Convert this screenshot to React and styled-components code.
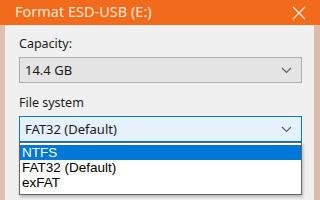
import React from 'react';
import styled, { createGlobalStyle } from 'styled-components';

const GlobalStyle = createGlobalStyle`
    html, body {
        margin: 0;
        padding: 0;
        width: 320px;
        height: 200px;
        overflow: hidden;
        background: #f0f0f0;
    }
`;

const Window = styled.div`
    width: 320px;
    height: 200px;
    display: flex;
    flex-direction: column;
    font-family: "Noto Sans", "Open Sans", sans-serif;
    color: #1a1a1a;
    box-sizing: border-box;
    overflow: hidden;
`;

const TitleBar = styled.div`
    height: 25px;
    flex: none;
    background: #f26a1c;
    display: flex;
    align-items: center;
    justify-content: space-between;
    padding: 0 14px 0 15px;
    box-sizing: border-box;
`;

const Title = styled.span`
    color: #fde6d4;
    font-size: 14.5px;
    line-height: 1;
    margin-top: -2px;
`;

const Body = styled.div`
    flex: 1;
    background: #f0f0f0;
    border-left: 5px solid #dfbfad;
    border-right: 6px solid #dcbcaa;
    padding: 11px 12px 0 14px;
    display: flex;
    flex-direction: column;
`;

const Label = styled.div`
    font-size: 12.5px;
    line-height: 16px;
    margin-top: ${p => p.$top || 0}px;
    margin-bottom: 5px;
`;

const Select = styled.div`
    height: ${p => p.$height}px;
    box-sizing: border-box;
    border: 1px solid ${p => (p.$open ? '#0078d7' : '#adadad')};
    background: ${p => (p.$open ? '#e5f1fb' : '#e5e5e5')};
    display: flex;
    align-items: center;
    justify-content: space-between;
    padding: 0 9px 0 5px;
    font-size: 13px;
`;

const DropList = styled.div`
    border: 1px solid #646464;
    background: #fff;
    padding: 2px 0 4px;
    box-shadow: 1px 2px 3px rgba(0, 0, 0, 0.25);
    font-family: "Liberation Sans", Arial, sans-serif;
    font-size: 13.5px;
`;

const Option = styled.div`
    height: 15px;
    line-height: 15px;
    padding-left: 2px;
    background: ${p => (p.$active ? '#0078d7' : 'transparent')};
    color: ${p => (p.$active ? '#fff' : '#000')};
`;

const Chevron = () => (
    <svg width="11" height="7" viewBox="0 0 11 7">
        <path d="M1 1 L5.5 5.5 L10 1" fill="none" stroke="#606060" strokeWidth="1.2" />
    </svg>
);

const Close = () => (
    <svg width="14" height="14" viewBox="0 0 14 14">
        <path d="M1 1 L13 13 M13 1 L1 13" stroke="#fde6d4" strokeWidth="1.3" />
    </svg>
);

export default function App() {
    return (
        <Window>
            <GlobalStyle />
            <TitleBar>
                <Title>Format ESD-USB (E:)</Title>
                <Close />
            </TitleBar>
            <Body>
                <Label>Capacity:</Label>
                <Select $height={26}>
                    <span>14.4 GB</span>
                    <Chevron />
                </Select>
                <Label $top={12}>File system</Label>
                <Select $height={26} $open>
                    <span>FAT32 (Default)</span>
                    <Chevron />
                </Select>
                <DropList>
                    <Option $active>NTFS</Option>
                    <Option>FAT32 (Default)</Option>
                    <Option>exFAT</Option>
                </DropList>
            </Body>
        </Window>
    );
}
